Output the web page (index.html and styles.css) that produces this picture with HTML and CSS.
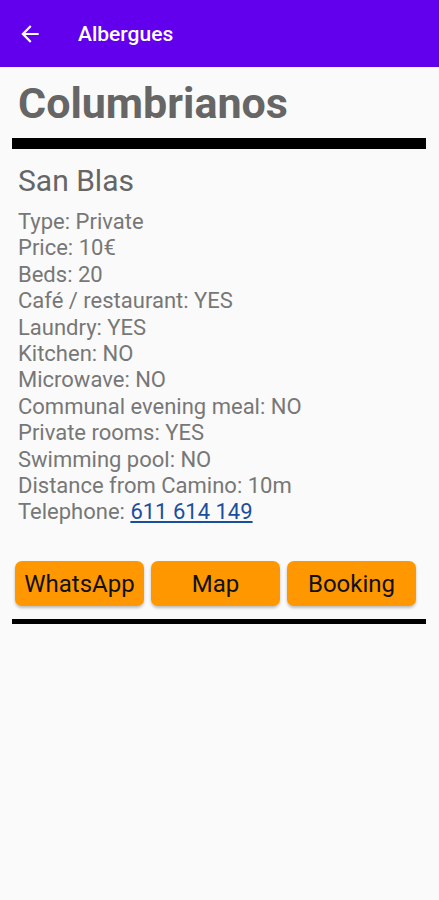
FILE: index.html
```html
<!doctype html>
<html>
<head>
<meta charset="utf-8">
<title>Albergues</title>
<link rel="stylesheet" href="styles.css">
</head>
<body>
<div class="topBar">
	<span class="back">
		<svg width="26" height="26" viewBox="0 0 24 24"><path d="M20 11H7.830l5.59-5.59L12 4l-8 8 8 8 1.41-1.41L7.83 13H20v-2z" fill="#fff"/></svg>
	</span>
	<h1 class="barTitle">Albergues</h1>
</div>
<div class="wrap">
	<h2 class="town">Columbrianos</h2>
	<div class="rule thick"></div>
	<div class="item">
		<h3 class="name">San Blas</h3>
		<ul class="info">
			<li>Type: Private</li>
			<li>Price: 10€</li>
			<li>Beds: 20</li>
			<li>Café / restaurant: YES</li>
			<li>Laundry: YES</li>
			<li>Kitchen: NO</li>
			<li>Microwave: NO</li>
			<li>Communal evening meal: NO</li>
			<li>Private rooms: YES</li>
			<li>Swimming pool: NO</li>
			<li>Distance from Camino: 10m</li>
			<li>Telephone: <a href="javascript:;">611 614 149</a></li>
		</ul>
		<div class="btns">
			<a class="btn" href="javascript:;">WhatsApp</a>
			<a class="btn" href="javascript:;">Map</a>
			<a class="btn" href="javascript:;">Booking</a>
		</div>
	</div>
	<div class="rule"></div>
</div>
</body>
</html>
```
FILE: styles.css
```css
*{ margin:0; padding:0}
body{ background:#fafafa; font-family:Roboto, "Noto Sans", sans-serif;}
ul{ list-style:none}
a{ text-decoration:none;}
.topBar{ height:67px; background:#6200ee; display:flex; align-items:center; color:#fff;}
.topBar .back{ width:26px; height:26px; margin-left:17px; display:flex;}
.topBar .barTitle{ font-size:21px; font-weight:500; margin-left:35px;}
.wrap{ padding:0 13px 0 12px;}
.town{ font-size:43px; font-weight:700; color:#666; padding:11px 0 0 6px; line-height:50px; margin-bottom:10px;}
.rule{ height:5px; background:#000;}
.rule.thick{ height:11px;}
.item{ padding:0 0 13px 0;}
.name{ font-size:30px; font-weight:400; color:#666; padding:14px 0 0 6px; line-height:36px; margin-bottom:10px;}
.info{ padding-left:6px; color:#777; font-size:22px; line-height:26.4px;}
.info a{ color:#1a4fa0; text-decoration:underline;}
.btns{ display:flex; gap:7px; margin-top:35px; padding:0 10px 0 3px;}
.btn{ flex:1; height:45px; line-height:47px; text-align:center; background:#ff9800; color:#111; font-size:24px; border-radius:7px; box-shadow:0 2px 3px rgba(0,0,0,0.25);}
```
